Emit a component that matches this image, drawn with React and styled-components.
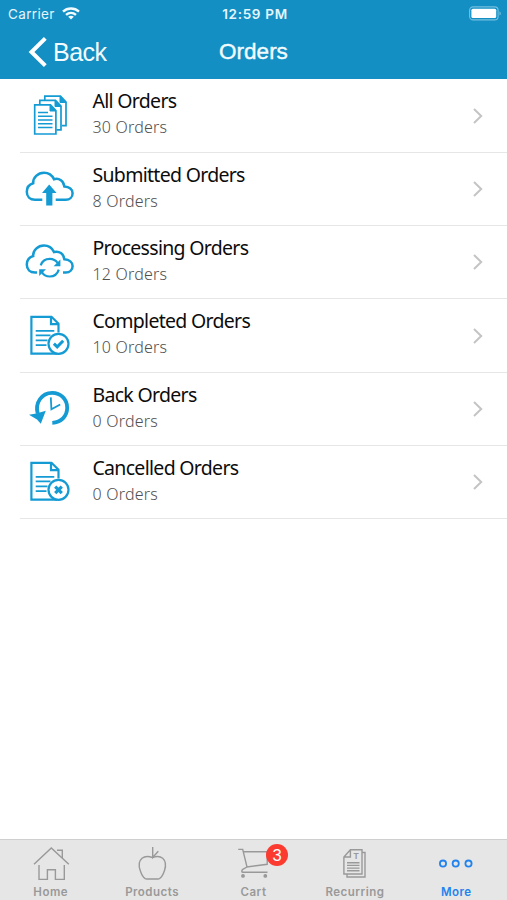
import React from "react";
import styled, { createGlobalStyle } from "styled-components";

const GlobalStyle = createGlobalStyle`
  * {
    box-sizing: border-box;
  }
  body {
    margin: 0;
    background-color: #ffffff;
    font-family: "Inter", "Liberation Sans", sans-serif;
  }
`;

const ScreenStyle = styled.div`
  display: flex;
  flex-direction: column;
  width: 507px;
  height: 900px;
  overflow: hidden;
  background-color: #ffffff;
`;

// header
const HeaderStyle = styled.header`
  flex: none;
  height: 79px;
  background-color: #138fc3;
  color: #ffffff;
`;
const StatusBarStyle = styled.div`
  display: grid;
  grid-template-columns: 1fr auto 1fr;
  align-items: center;
  height: 27px;
  padding: 0 5px 0 8px;
`;
const CarrierStyle = styled.div`
  display: flex;
  align-items: center;
  gap: 7px;
  font-size: 13.5px;
  letter-spacing: 0.35px;
  color: #e4f5fc;
`;
const ClockStyle = styled.div`
  font-size: 13.5px;
  font-weight: 600;
  letter-spacing: 0.7px;
  color: #e4f5fc;
`;
const BatteryStyle = styled.svg`
  justify-self: end;
`;
const NavBarStyle = styled.nav`
  display: grid;
  grid-template-columns: 1fr auto 1fr;
  align-items: center;
  height: 50px;
  padding-left: 28px;
  padding-right: 28px;
`;
const BackButtonStyle = styled.button`
  display: flex;
  align-items: center;
  gap: 6px;
  padding: 0;
  border: 0;
  background: none;
  color: #f2fbff;
  font-family: "Liberation Sans", sans-serif;
  font-size: 25px;
  letter-spacing: -0.5px;
`;
const NavTitleStyle = styled.h1`
  margin: 0;
  font-family: "Liberation Sans", sans-serif;
  font-size: 22.5px;
  font-weight: 400;
  color: #f2fbff;
  -webkit-text-stroke: 0.4px #f2fbff;
`;

// list
const ListStyle = styled.ul`
  flex: 1;
  margin: 0;
  padding: 0.5px 0 0 20px;
  list-style: none;
`;
const RowStyle = styled.li`
  display: flex;
  align-items: center;
  height: 73.3px;
  border-bottom: 1px solid #e6e6e6;
`;
const RowIconStyle = styled.svg`
  flex: none;
  width: 60px;
  height: 72px;
  fill: none;
  stroke: #159bd3;
  stroke-width: 2.2;
`;
const RowTextStyle = styled.div`
  flex: 1;
  padding-left: 12.5px;
  padding-bottom: 1.6px;
  font-family: "Noto Sans", sans-serif;
  white-space: nowrap;
`;
const RowTitleStyle = styled.div`
  font-size: 19.5px;
  line-height: 26px;
  letter-spacing: -0.7px;
  color: #0c0c0c;
`;
const RowCountStyle = styled.div`
  font-size: 16px;
  font-weight: 300;
  line-height: 27px;
  letter-spacing: 0.2px;
  color: #505050;
`;
const ChevronStyle = styled.svg`
  flex: none;
  margin-right: 23px;
`;

// tab bar
const TabBarStyle = styled.footer`
  display: grid;
  grid-template-columns: repeat(5, 1fr);
  flex: none;
  height: 61px;
  border-top: 1px solid #cfcfcf;
  background-color: #e6e6e6;
`;
const TabStyle = styled.div`
  display: flex;
  flex-direction: column;
  align-items: center;
  padding-top: 4px;
  color: ${({ $active }) => ($active ? "#2283ee" : "#999999")};
`;
const TabIconWrapStyle = styled.div`
  position: relative;
  width: 40px;
  height: 40px;
`;
const TabIconStyle = styled.svg`
  display: block;
  fill: none;
  stroke: currentColor;
  stroke-width: 1.4;
`;
const TabLabelStyle = styled.span`
  font-size: 11.5px;
  font-weight: 600;
  line-height: 17px;
  letter-spacing: 0.5px;
`;
const BadgeStyle = styled.span`
  position: absolute;
  top: 0;
  left: 32.5px;
  width: 22px;
  height: 22px;
  border-radius: 50%;
  background-color: #fb3b30;
  color: #ffffff;
  font-family: "Liberation Sans", sans-serif;
  font-size: 16.5px;
  line-height: 22px;
  text-align: center;
`;

const AllIcon = () => (
  <g strokeWidth="1.7">
    <path d="M24.8 20V16.2H40.5L46 22V45.6H42" />
    <path d="M40 16V22.5H46Z" fill="#159bd3" strokeWidth="1" />
    <path d="M19.8 24V20.4H35.5L41 26V49.8H36.5" />
    <path d="M35 20V26.5H41Z" fill="#159bd3" strokeWidth="1" />
    <path d="M14.7 24.9H30.5L35.9 30.5V54H14.7Z" />
    <path d="M30 25V31H36Z" fill="#159bd3" strokeWidth="1" />
    <path d="M18 32.4H28M18 36.2H32.5M18 40H32.5M18 43.8H32.5M18 47.6H32.5" strokeWidth="1.5" />
  </g>
);

const SubmittedIcon = () => (
  <>
    <path
      d="M22.3 46.8H15C10 46.8 6.8 43.5 6.8 38.8C6.8 34.5 9.4 31.3 13.2 30.2C12.8 24.5 18 19.8 24 19.8C28.7 19.8 32.2 22.4 34 26.2C39.2 24.8 43.8 28 44.3 33.4C49.4 33.8 52.6 36.5 52.6 40.2C52.6 44 49.8 46.8 45.8 46.8H35.7"
      strokeWidth="2.5"
    />
    <path d="M29.2 31.5L36.6 40H32.4V52.4H26.2V40H22Z" fill="#159bd3" stroke="none" />
  </>
);

const ProcessingIcon = () => (
  <>
    <path
      d="M17 46.6H15C10 46.6 6.8 43.3 6.8 38.6C6.8 34.3 9.4 31.1 13.2 30C12.8 24.3 18 19.6 24 19.6C28.7 19.6 32.2 22.2 34 26C39.2 24.6 43.8 27.8 44.3 33.2C49.4 33.6 52.6 36.3 52.6 40C52.6 43.8 49.8 46.6 45.8 46.6H43"
      strokeWidth="2.5"
    />
    <path d="M20.7 39.3C22 35.5 25.5 32.9 29.8 32.9C33.2 32.9 36 34.5 37.6 37" />
    <path d="M38.8 43.6C37.5 47.8 34 50.5 29.8 50.5C26.3 50.5 23.3 48.7 21.8 46" />
    <path d="M40.4 33.5V40.2H33.6ZM19.2 50V43.3H26Z" fill="#159bd3" stroke="none" />
  </>
);

// page with a status circle in the corner, shared by completed and cancelled
const DocumentIcon = ({ children }) => (
  <>
    <path d="M38.5 32.5V23.8L31.5 16.8H11.4V53.7H37" />
    <path d="M31 16.8V24.2H38.4" />
    <path d="M15.7 30.8H34.3M15.7 35.4H30.5M15.7 40.3H27.5M15.7 45.1H26.5" strokeWidth="1.7" />
    <circle cx="38.5" cy="43.8" r="10" fill="#ffffff" />
    {children}
  </>
);

const CompletedIcon = () => (
  <DocumentIcon>
    <path d="M33.9 43.7L37.2 46.8L43.2 40.8" strokeWidth="3" />
  </DocumentIcon>
);

const CancelledIcon = () => (
  <DocumentIcon>
    <path d="M35.2 40.6L41.8 47.2M41.8 40.6L35.2 47.2" strokeWidth="3.2" />
  </DocumentIcon>
);

const BackOrderIcon = () => (
  <>
    <path d="M17.7 40.5C14.8 30 21.5 19.8 32.2 19.8C40.8 19.8 47.2 26.3 47.2 34.8C47.2 43.3 41 49.4 32.3 49.8" strokeWidth="3.8" />
    <path d="M9 41.7L16.3 40.6L25.8 37.7L20.8 50.8L17 46.5Z" fill="#159bd3" stroke="none" />
    <path d="M30.8 24.4L31.4 36.3L40.2 31.5" strokeWidth="1.8" />
  </>
);

const HomeIcon = () => (
  <>
    <path d="M3 20.3L20.3 4L37.8 20.3" />
    <path d="M26 6.2H31.3V14" />
    <path d="M8 21V35.4H16.4V25.8H24.4V35.4H33.3V21" />
  </>
);

const AppleIcon = () => (
  <>
    <path d="M20.7 3V13.4L26.3 7.2" />
    <path d="M20.5 13.5C17.5 12.4 12.8 12 10 14.2C6.8 17 6.7 22 8.2 26.4C9.4 30 11 33.3 13.2 34.6C14.4 35.2 17.5 35 20.3 35C23.2 35 26.2 35.2 27.4 34.6C29.8 33.2 31.5 29.6 32.6 26.2C34 21.8 33.8 17 30.7 14.2C28 12 23.5 12.4 20.5 13.5Z" />
  </>
);

const CartIcon = () => (
  <>
    <path d="M5.2 5.4H9.7L14 23L34.2 20.3V7.8H10.3" />
    <path d="M14 23L9.8 25.3C8.5 26.2 8.4 28.3 10 28.3H34.5" />
    <circle cx="10" cy="31.9" r="1.2" fill="currentColor" />
    <circle cx="32.3" cy="31.9" r="1.2" fill="currentColor" />
  </>
);

const LetterStyle = styled.text`
  font-family: "Liberation Sans", sans-serif;
  font-size: 8.5px;
  font-weight: 700;
  fill: currentColor;
  stroke: none;
`;

const RecurringIcon = () => (
  <>
    <path d="M15.4 5.7H27V30H8.9V13ZM15.4 5.7V13H8.9" />
    <path d="M27 8.5H30V33H12V30" />
    <path d="M12 18.7H24.5M12 21.4H24.5M12 24.1H24.5M12 26.8H24.5" />
    <LetterStyle x="18.6" y="14.8">T</LetterStyle>
  </>
);

const MoreIcon = () => (
  <g strokeWidth="1.8">
    <circle cx="7" cy="19.6" r="3.1" />
    <circle cx="19.7" cy="19.6" r="3.1" />
    <circle cx="32.5" cy="19.6" r="3.1" />
  </g>
);

const orders = [
  { title: "All Orders", count: 30, icon: AllIcon },
  { title: "Submitted Orders", count: 8, icon: SubmittedIcon },
  { title: "Processing Orders", count: 12, icon: ProcessingIcon },
  { title: "Completed Orders", count: 10, icon: CompletedIcon },
  { title: "Back Orders", count: 0, icon: BackOrderIcon },
  { title: "Cancelled Orders", count: 0, icon: CancelledIcon },
];

const tabs = [
  { label: "Home", icon: HomeIcon },
  { label: "Products", icon: AppleIcon },
  { label: "Cart", icon: CartIcon, badge: 3 },
  { label: "Recurring", icon: RecurringIcon },
  { label: "More", icon: MoreIcon, active: true },
];

const Header = () => (
  <HeaderStyle>
    <StatusBarStyle>
      <CarrierStyle>
        Carrier
        <svg width="18" height="13" viewBox="0 0 18 13" fill="none" stroke="#f2fbff" strokeWidth="2.4">
          <path d="M1 4.6C5.5 0.4 12.5 0.4 17 4.6" />
          <path d="M4 7.8C7 5.2 11 5.2 14 7.8" />
          <path d="M9 12.4L6.2 9.7C7.8 8.4 10.2 8.4 11.8 9.7Z" fill="#f2fbff" stroke="none" />
        </svg>
      </CarrierStyle>
      <ClockStyle>12:59 PM</ClockStyle>
      <BatteryStyle width="33" height="15" viewBox="0 0 33 15">
        <rect x="0.6" y="0.9" width="28.5" height="13" rx="3.5" fill="none" stroke="#74c0e0" strokeWidth="1.1" />
        <rect x="2.4" y="2.8" width="24.8" height="9.2" rx="1.5" fill="#ffffff" />
        <path d="M30.5 5.2C32.3 6 32.3 8.8 30.5 9.6Z" fill="#74c0e0" />
      </BatteryStyle>
    </StatusBarStyle>
    <NavBarStyle>
      <BackButtonStyle type="button">
        <svg width="19" height="32" viewBox="0 0 19 32" fill="none" stroke="#ffffff" strokeWidth="4">
          <path d="M17.3 2.4L3.5 16L17.3 29.6" />
        </svg>
        Back
      </BackButtonStyle>
      <NavTitleStyle>Orders</NavTitleStyle>
    </NavBarStyle>
  </HeaderStyle>
);

const OrderRow = ({ order }) => {
  const Icon = order.icon;
  return (
    <RowStyle>
      <RowIconStyle viewBox="0 0 60 72">
        <Icon />
      </RowIconStyle>
      <RowTextStyle>
        <RowTitleStyle>{order.title}</RowTitleStyle>
        <RowCountStyle>{order.count} Orders</RowCountStyle>
      </RowTextStyle>
      <ChevronStyle width="12" height="18" viewBox="0 0 12 18" fill="none" stroke="#c4c4c4" strokeWidth="2">
        <path d="M2 2L9.2 9L2 16" />
      </ChevronStyle>
    </RowStyle>
  );
};

const Tab = ({ tab }) => {
  const Icon = tab.icon;
  return (
    <TabStyle $active={tab.active}>
      <TabIconWrapStyle>
        <TabIconStyle width="40" height="40" viewBox="0 0 40 40">
          <Icon />
        </TabIconStyle>
        {tab.badge && <BadgeStyle>{tab.badge}</BadgeStyle>}
      </TabIconWrapStyle>
      <TabLabelStyle>{tab.label}</TabLabelStyle>
    </TabStyle>
  );
};

const App = () => {
  return (
    <>
      <GlobalStyle />
      <ScreenStyle>
        <Header />
        <ListStyle>
          {orders.map((order) => (
            <OrderRow key={order.title} order={order} />
          ))}
        </ListStyle>
        <TabBarStyle>
          {tabs.map((tab) => (
            <Tab key={tab.label} tab={tab} />
          ))}
        </TabBarStyle>
      </ScreenStyle>
    </>
  );
};

export default App;
